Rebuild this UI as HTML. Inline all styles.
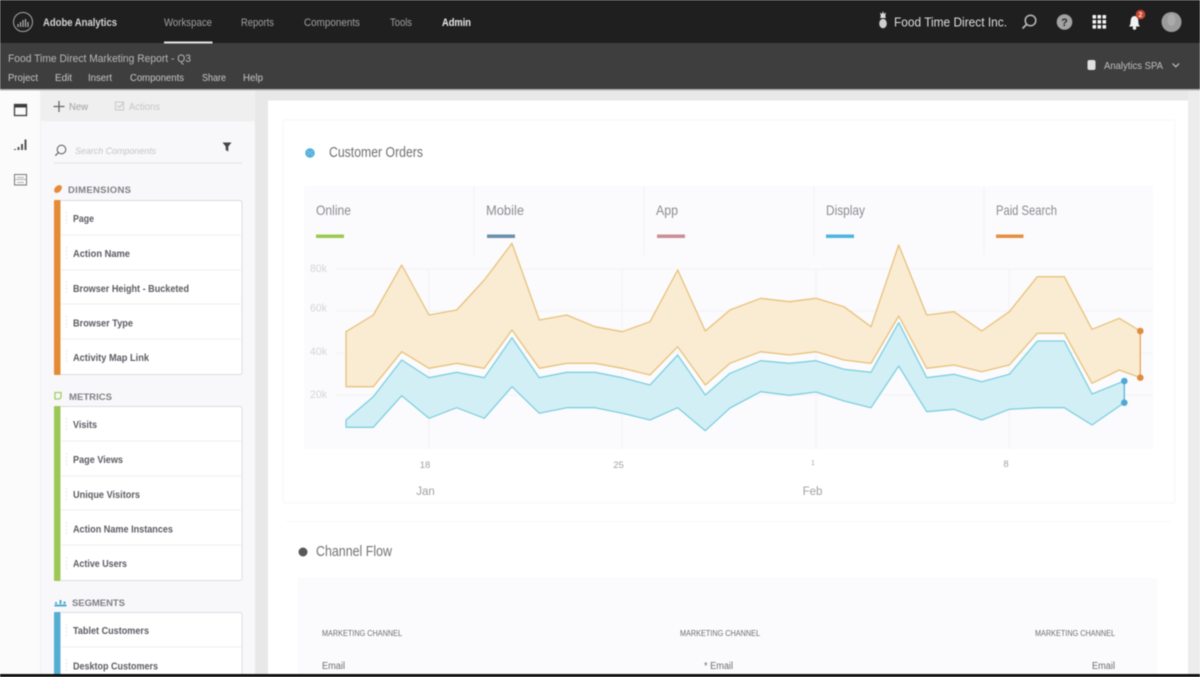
<!DOCTYPE html>
<html><head><meta charset="utf-8"><title>Food Time Direct Marketing Report</title>
<style>
html,body{margin:0;padding:0;width:1200px;height:677px;overflow:hidden;background:#fff}
svg{display:block;filter:blur(.45px)}
text{font-family:"Liberation Sans",sans-serif}
.top{font-size:11px;fill:#a0a0a0}
.menu{font-size:10.5px;fill:#c8c8c8}
.item{font-size:10px;font-weight:bold;fill:#5c5c63}
.head{font-size:9.5px;font-weight:bold;fill:#808085}
.leg{font-size:14px;fill:#8c8c91}
.ax{font-size:11px;fill:#d6d6da}
.dt{font-size:9.5px;fill:#a2a2a6}
.mo{font-size:11.5px;fill:#a0a0a4}
.mc{font-size:8px;fill:#6c6c70}
.em{font-size:10px;fill:#6c6c70}
</style></head><body>
<svg width="1200" height="677" viewBox="0 0 1200 677" xmlns="http://www.w3.org/2000/svg">
<rect width="1200" height="677" fill="#fff"/>
<!-- header -->
<rect width="1200" height="43" fill="#1f1f1f"/>
<rect y="43" width="1200" height="46" fill="#3e3e3e"/>
<rect y="89" width="1200" height="1.5" fill="#b4b4b4"/>
<circle cx="23" cy="22" r="9.5" fill="none" stroke="#a5a5a5" stroke-width="1"/>
<path d="M18 27v-3M20.500 27v-5M23 27v-7M25.500 27v-8M28 27v-5" stroke="#b5b5b5" stroke-width="1.200"/>
<text x="43" y="26" class="top" style="fill:#d4d4d4;font-weight:bold" textLength="74" lengthAdjust="spacingAndGlyphs">Adobe Analytics</text>
<text x="164" y="26" class="top" textLength="48" lengthAdjust="spacingAndGlyphs">Workspace</text>
<text x="241" y="26" class="top" textLength="33" lengthAdjust="spacingAndGlyphs">Reports</text>
<text x="304" y="26" class="top" textLength="56" lengthAdjust="spacingAndGlyphs">Components</text>
<text x="390" y="26" class="top" textLength="22" lengthAdjust="spacingAndGlyphs">Tools</text>
<text x="442" y="26" class="top" style="fill:#ececec;font-weight:bold" textLength="29" lengthAdjust="spacingAndGlyphs">Admin</text>
<rect x="164" y="41.500" width="48.500" height="2" fill="#e4e4e4"/>
<text x="8" y="62" style="font-size:11px;fill:#b8b8b8" textLength="183" lengthAdjust="spacingAndGlyphs">Food Time Direct Marketing Report - Q3</text>
<text x="8" y="81" class="menu" textLength="30" lengthAdjust="spacingAndGlyphs">Project</text>
<text x="55" y="81" class="menu" textLength="17" lengthAdjust="spacingAndGlyphs">Edit</text>
<text x="88" y="81" class="menu" textLength="24" lengthAdjust="spacingAndGlyphs">Insert</text>
<text x="130" y="81" class="menu" textLength="54" lengthAdjust="spacingAndGlyphs">Components</text>
<text x="202" y="81" class="menu" textLength="24" lengthAdjust="spacingAndGlyphs">Share</text>
<text x="243" y="81" class="menu" textLength="20" lengthAdjust="spacingAndGlyphs">Help</text>
<!-- header right -->
<path d="M883 11l-1 3-2-1.500 .8 3.500-.8 2h6l-.8-2 .8-3.500-2 1.500z" fill="#dcdcdc"/>
<ellipse cx="883" cy="23.500" rx="3.800" ry="4.800" fill="#d0d0d0"/>
<text x="894" y="26.500" style="font-size:13px;fill:#dedede" textLength="113" lengthAdjust="spacingAndGlyphs">Food Time Direct Inc.</text>
<circle cx="1030.500" cy="20.500" r="5.300" fill="none" stroke="#b9b9b9" stroke-width="1.500"/>
<path d="M1026.500 24.500l-4 4" stroke="#b9b9b9" stroke-width="1.800"/>
<circle cx="1064.500" cy="22" r="7.800" fill="#a3a3a3"/>
<text x="1064.500" y="26" text-anchor="middle" style="font-size:11px;font-weight:bold;fill:#2a2a2a">?</text>
<g fill="#f2f2f2"><rect x="1092.500" y="15" width="3.600" height="3.600" rx=".6"/><rect x="1097.500" y="15" width="3.600" height="3.600" rx=".6"/><rect x="1102.500" y="15" width="3.600" height="3.600" rx=".6"/><rect x="1092.500" y="20" width="3.600" height="3.600" rx=".6"/><rect x="1097.500" y="20" width="3.600" height="3.600" rx=".6"/><rect x="1102.500" y="20" width="3.600" height="3.600" rx=".6"/><rect x="1092.500" y="25" width="3.600" height="3.600" rx=".6"/><rect x="1097.500" y="25" width="3.600" height="3.600" rx=".6"/><rect x="1102.500" y="25" width="3.600" height="3.600" rx=".6"/></g>
<path d="M1129 26.500c1.600-1.500 1.500-3.500 1.700-6 .3-3 1.800-4.500 3.800-4.500s3.500 1.500 3.800 4.500c.2 2.500.1 4.500 1.700 6z" fill="#f2f2f2"/>
<circle cx="1134.500" cy="28" r="1.800" fill="#f2f2f2"/>
<circle cx="1140.500" cy="14.500" r="4.800" fill="#c8452e"/>
<text x="1140.500" y="17" text-anchor="middle" style="font-size:7px;font-weight:bold;fill:#f4dcd6">2</text>
<circle cx="1171.500" cy="22" r="10" fill="#9b9b9b"/>
<ellipse cx="1171.500" cy="20" rx="4" ry="6" fill="#ababab"/>
<!-- db + project -->
<rect x="1087.500" y="60" width="8" height="10" rx="2" fill="#e0e0e0"/>
<text x="1104" y="69" style="font-size:10.500px;fill:#c0c0c0" textLength="59" lengthAdjust="spacingAndGlyphs">Analytics SPA</text>
<path d="M1172.500 63.500l3.300 3.300 3.300-3.300" fill="none" stroke="#c4c4c4" stroke-width="1.200"/>
<!-- sidebar -->
<rect y="90.500" width="41" height="583.500" fill="#fbfbfb"/>
<rect x="41" y="90.500" width="214" height="583.500" fill="#f8f8fa"/>
<rect x="41" y="90.500" width="214" height="31" fill="#efeff0"/>
<rect x="40" y="90.500" width="1" height="583.500" fill="#f1f1f1"/>
<rect x="255" y="90.500" width="945" height="10" fill="#e8e8e8"/>
<rect x="255" y="90.500" width="13" height="583.500" fill="#e8e8e8"/>
<rect x="1188" y="90.500" width="12" height="583.500" fill="#ececec"/>
<!-- rail icons -->
<rect x="14.500" y="104.500" width="12" height="11" fill="none" stroke="#3d3d3d" stroke-width="1.300"/>
<rect x="14.500" y="104.500" width="12" height="3" fill="#3d3d3d"/>
<path d="M15 150v-1M18.500 150v-3M22 150v-6M25.500 150v-10.500" stroke="#555" stroke-width="2"/>
<rect x="14.500" y="174.500" width="12" height="10.500" fill="none" stroke="#777" stroke-width="1"/>
<path d="M14.500 179.500h12M17 177.500h7M17 182.500h7" stroke="#999" stroke-width=".8"/>
<!-- toolbar -->
<path d="M59 101v11M53.500 106.500h11" stroke="#666" stroke-width="1.300"/>
<text x="69" y="110" style="font-size:10.500px;fill:#9f9f9f" textLength="19" lengthAdjust="spacingAndGlyphs">New</text>
<rect x="115.500" y="102" width="8" height="8" fill="none" stroke="#c8c8c8"/>
<path d="M117.500 105.500l2 2 4-5" fill="none" stroke="#c2c2c2"/>
<text x="129" y="110" style="font-size:10.500px;fill:#c6c6c6" textLength="31" lengthAdjust="spacingAndGlyphs">Actions</text>
<!-- search -->
<circle cx="61.500" cy="149.500" r="4.300" fill="none" stroke="#666" stroke-width="1.100"/>
<path d="M58.300 152.700l-3 3" stroke="#666" stroke-width="1.200"/>
<text x="75" y="154" style="font-size:9.500px;font-style:italic;fill:#c4c4c4" textLength="81" lengthAdjust="spacingAndGlyphs">Search Components</text>
<path d="M222.500 142.500h9l-3.200 4v5l-2.600-1.500v-3.500z" fill="#444"/>
<rect x="54" y="162.500" width="188" height="1" fill="#e2e2e4"/>
<!-- section heads -->
<ellipse cx="58" cy="189" rx="4.600" ry="3.100" fill="#e58b35" transform="rotate(-45 58 189)"/>
<text x="68" y="193" class="head" textLength="63" lengthAdjust="spacing">DIMENSIONS</text>
<path d="M55 392.500h6v5l-1.500 1.500h-4.500z" fill="none" stroke="#a4cd64" stroke-width="1.300"/>
<text x="69" y="400" class="head" textLength="43" lengthAdjust="spacing">METRICS</text>
<path d="M54.500 605.500h12" stroke="#4eacd3" stroke-width="2"/>
<path d="M56 604v-2M60.500 604v-4M64.500 604v-2.500" stroke="#4eacd3" stroke-width="2"/>
<text x="72" y="606" class="head" textLength="53" lengthAdjust="spacing">SEGMENTS</text>
<!-- boxes -->
<g fill="#fff" stroke="#dcdce0" stroke-width="1">
<rect x="54.500" y="200.500" width="187.500" height="174" rx="2"/>
<rect x="54.500" y="406.500" width="187.500" height="174" rx="2"/>
<rect x="54.500" y="612.500" width="187.500" height="70" rx="2"/>
</g>
<rect x="54" y="200" width="6.500" height="175" rx="1" fill="#e58b35"/>
<rect x="54" y="406" width="6.500" height="175" rx="1" fill="#9dc855"/>
<rect x="54" y="612" width="6.500" height="70" rx="1" fill="#53aed2"/>
<path d="M61 235h180M61 270h180M61 304h180M61 339h180M61 441h180M61 476h180M61 510h180M61 545h180M61 647h180" stroke="#eeeef0" stroke-width="1"/>
<path d="M66.500 212v14M66.500 247v14M66.500 281v14M66.500 316v14M66.500 350v14M66.500 418v14M66.500 453v14M66.500 488v14M66.500 522v14M66.500 557v14M66.500 624v14M66.500 659v14" stroke="#dedee0" stroke-width="1" stroke-dasharray="1.500 2"/>
<text x="73" y="222" class="item" textLength="21" lengthAdjust="spacingAndGlyphs">Page</text>
<text x="73" y="257" class="item" textLength="57" lengthAdjust="spacingAndGlyphs">Action Name</text>
<text x="73" y="292" class="item" textLength="116" lengthAdjust="spacingAndGlyphs">Browser Height - Bucketed</text>
<text x="73" y="326.500" class="item" textLength="60" lengthAdjust="spacingAndGlyphs">Browser Type</text>
<text x="73" y="361" class="item" textLength="76" lengthAdjust="spacingAndGlyphs">Activity Map Link</text>
<text x="73" y="428" class="item" textLength="24" lengthAdjust="spacingAndGlyphs">Visits</text>
<text x="73" y="463" class="item" textLength="50" lengthAdjust="spacingAndGlyphs">Page Views</text>
<text x="73" y="498" class="item" textLength="67" lengthAdjust="spacingAndGlyphs">Unique Visitors</text>
<text x="73" y="532.500" class="item" textLength="100" lengthAdjust="spacingAndGlyphs">Action Name Instances</text>
<text x="73" y="567" class="item" textLength="54" lengthAdjust="spacingAndGlyphs">Active Users</text>
<text x="73" y="634" class="item" textLength="76" lengthAdjust="spacingAndGlyphs">Tablet Customers</text>
<text x="73" y="669.500" class="item" textLength="85" lengthAdjust="spacingAndGlyphs">Desktop Customers</text>
<!-- main card -->
<rect x="283" y="120" width="892" height="383" rx="2" fill="#fff" stroke="#f6f6f8"/>
<circle cx="310" cy="153" r="4.800" fill="#52afdc"/>
<path d="M308 151.500h.1M312 151.500h.1M310 153h.1M308 154.500h.1M312 154.500h.1" stroke="#cfeaf5" stroke-linecap="round"/>
<text x="329" y="157" style="font-size:15px;fill:#707074" textLength="94" lengthAdjust="spacingAndGlyphs">Customer Orders</text>
<rect x="304" y="186" width="849" height="263" fill="#fbfbfd"/>
<path d="M474 186v69M644 186v69M814 186v69M984 186v69" stroke="#f3f3f6"/>
<text x="316" y="215" class="leg" textLength="35" lengthAdjust="spacingAndGlyphs">Online</text>
<text x="486" y="215" class="leg" textLength="38" lengthAdjust="spacingAndGlyphs">Mobile</text>
<text x="656" y="215" class="leg" textLength="22" lengthAdjust="spacingAndGlyphs">App</text>
<text x="826" y="215" class="leg" textLength="39" lengthAdjust="spacingAndGlyphs">Display</text>
<text x="996" y="215" class="leg" textLength="61" lengthAdjust="spacingAndGlyphs">Paid Search</text>
<rect x="316" y="234.500" width="28" height="3.500" fill="#9cc94f"/>
<rect x="487" y="234.500" width="28" height="3.500" fill="#6a90ad"/>
<rect x="657" y="234.500" width="28" height="3.500" fill="#c98f96"/>
<rect x="826" y="234.500" width="28" height="3.500" fill="#4fb5dc"/>
<rect x="996" y="234.500" width="27.500" height="3.500" fill="#e39040"/>
<!-- grid -->
<path d="M335 269h818M335 311h818M335 353h818M335 395h818M429 269v180M622 269v180M816 269v180M1009 269v180" stroke="#f3f3f6"/>
<text x="310" y="272" class="ax" textLength="17" lengthAdjust="spacingAndGlyphs">80k</text>
<text x="310" y="311.500" class="ax" textLength="17" lengthAdjust="spacingAndGlyphs">60k</text>
<text x="310" y="355" class="ax" textLength="17" lengthAdjust="spacingAndGlyphs">40k</text>
<text x="310" y="398" class="ax" textLength="17" lengthAdjust="spacingAndGlyphs">20k</text>
<!-- orange area -->
<polygon fill="#faebd3" stroke="#e8c27a" stroke-width="1.300" stroke-linejoin="round" points="346,331.700 373.300,315 401.700,265 429,315 456.700,310 484.300,280 512,243.300 539.300,320 566.700,315 595,326.700 622.300,331.700 650,321.700 677.700,270 705.300,331 730,310 760.700,298.300 789.300,301.700 816,298.300 844,306.700 871,326.700 898.700,245 926.700,315 954,311.700 981.700,331 1009.300,311.700 1037.300,276.700 1064.300,276.700 1092,329.300 1119.300,318.300 1140.300,331 1140.300,377.700 1119.300,370 1092,383.300 1064.300,333.300 1037.300,333.300 1009.300,365 981.700,371.700 954,365 926.700,368.300 898.700,316 871,363.300 844,360 816,351.700 789.300,355 760.700,351.700 730,363.300 705.300,385 677.700,346.700 650,375 622.300,368.300 595,363.300 566.700,363.300 539.300,368.300 512,330 484.300,368.300 456.700,363.300 429,368.300 401.700,351.700 373.300,386.700 346,386.700"/>
<!-- blue area -->
<polygon fill="#d2eff6" stroke="#7fcfe0" stroke-width="1.300" stroke-linejoin="round" points="346,420 373.300,396.700 401.700,360 429,377.700 456.700,372.300 484.300,377.700 512,337.700 539.300,377.700 566.700,372.300 595,372.300 622.300,377.700 650,385 677.700,355 705.300,395 730,373.300 760.700,360.700 789.300,363.300 816,360.700 844,369.300 871,372.300 898.700,322.700 926.700,377.700 954,374.300 981.700,381.700 1009.300,374.300 1037.300,341 1064.300,341 1092,394 1124.300,381 1124.300,402.700 1092,425 1064.300,407.700 1037.300,407.700 1009.300,409.300 981.700,420 954,409.300 926.700,411.700 898.700,366 871,407.700 844,401 816,392 789.300,395.300 760.700,391.700 730,408 705.300,430.700 677.700,407.700 650,420 622.300,413.300 595,407.700 566.700,407.700 539.300,413.300 512,386.700 484.300,418.300 456.700,407.700 429,418.300 401.700,395.700 373.300,427.300 346,427.300"/>
<path d="M1140.300 331v46.700" stroke="#e8a860" stroke-width="1.200"/>
<path d="M1124.300 381v21.700" stroke="#62b4dc" stroke-width="1.200"/>
<circle cx="1140.300" cy="331" r="3.300" fill="#df8c3f"/>
<circle cx="1140.300" cy="377.700" r="3.300" fill="#df8c3f"/>
<circle cx="1124.300" cy="381" r="3.300" fill="#4fa9d6"/>
<circle cx="1124.300" cy="402.700" r="3.300" fill="#4fa9d6"/>
<!-- dates -->
<text x="425" y="468" text-anchor="middle" class="dt">18</text>
<text x="618.500" y="468" text-anchor="middle" class="dt">25</text>
<text x="813" y="465" text-anchor="middle" style="font-size:7px;fill:#a6a6aa">1</text>
<text x="1006" y="467" text-anchor="middle" class="dt">8</text>
<text x="425.500" y="495" text-anchor="middle" class="mo">Jan</text>
<text x="812.500" y="495" text-anchor="middle" class="mo">Feb</text>
<!-- channel flow -->
<rect x="286" y="521" width="886" height="1" fill="#f8f8fa"/>
<circle cx="303" cy="552" r="4.500" fill="#58585c"/>
<text x="316" y="556" style="font-size:14.500px;fill:#727276" textLength="76" lengthAdjust="spacingAndGlyphs">Channel Flow</text>
<rect x="298" y="578" width="859" height="96" fill="#fbfafc"/>
<text x="322" y="636" class="mc" textLength="80" lengthAdjust="spacingAndGlyphs">MARKETING CHANNEL</text>
<text x="680" y="636" class="mc" textLength="80" lengthAdjust="spacingAndGlyphs">MARKETING CHANNEL</text>
<text x="1035" y="636" class="mc" textLength="80" lengthAdjust="spacingAndGlyphs">MARKETING CHANNEL</text>
<text x="322" y="669" class="em" textLength="23" lengthAdjust="spacingAndGlyphs">Email</text>
<text x="704" y="669" class="em" textLength="29" lengthAdjust="spacingAndGlyphs">* Email</text>
<text x="1092" y="669" class="em" textLength="23" lengthAdjust="spacingAndGlyphs">Email</text>
<rect y="674" width="1200" height="3" fill="#111"/>
</svg>
</body></html>
